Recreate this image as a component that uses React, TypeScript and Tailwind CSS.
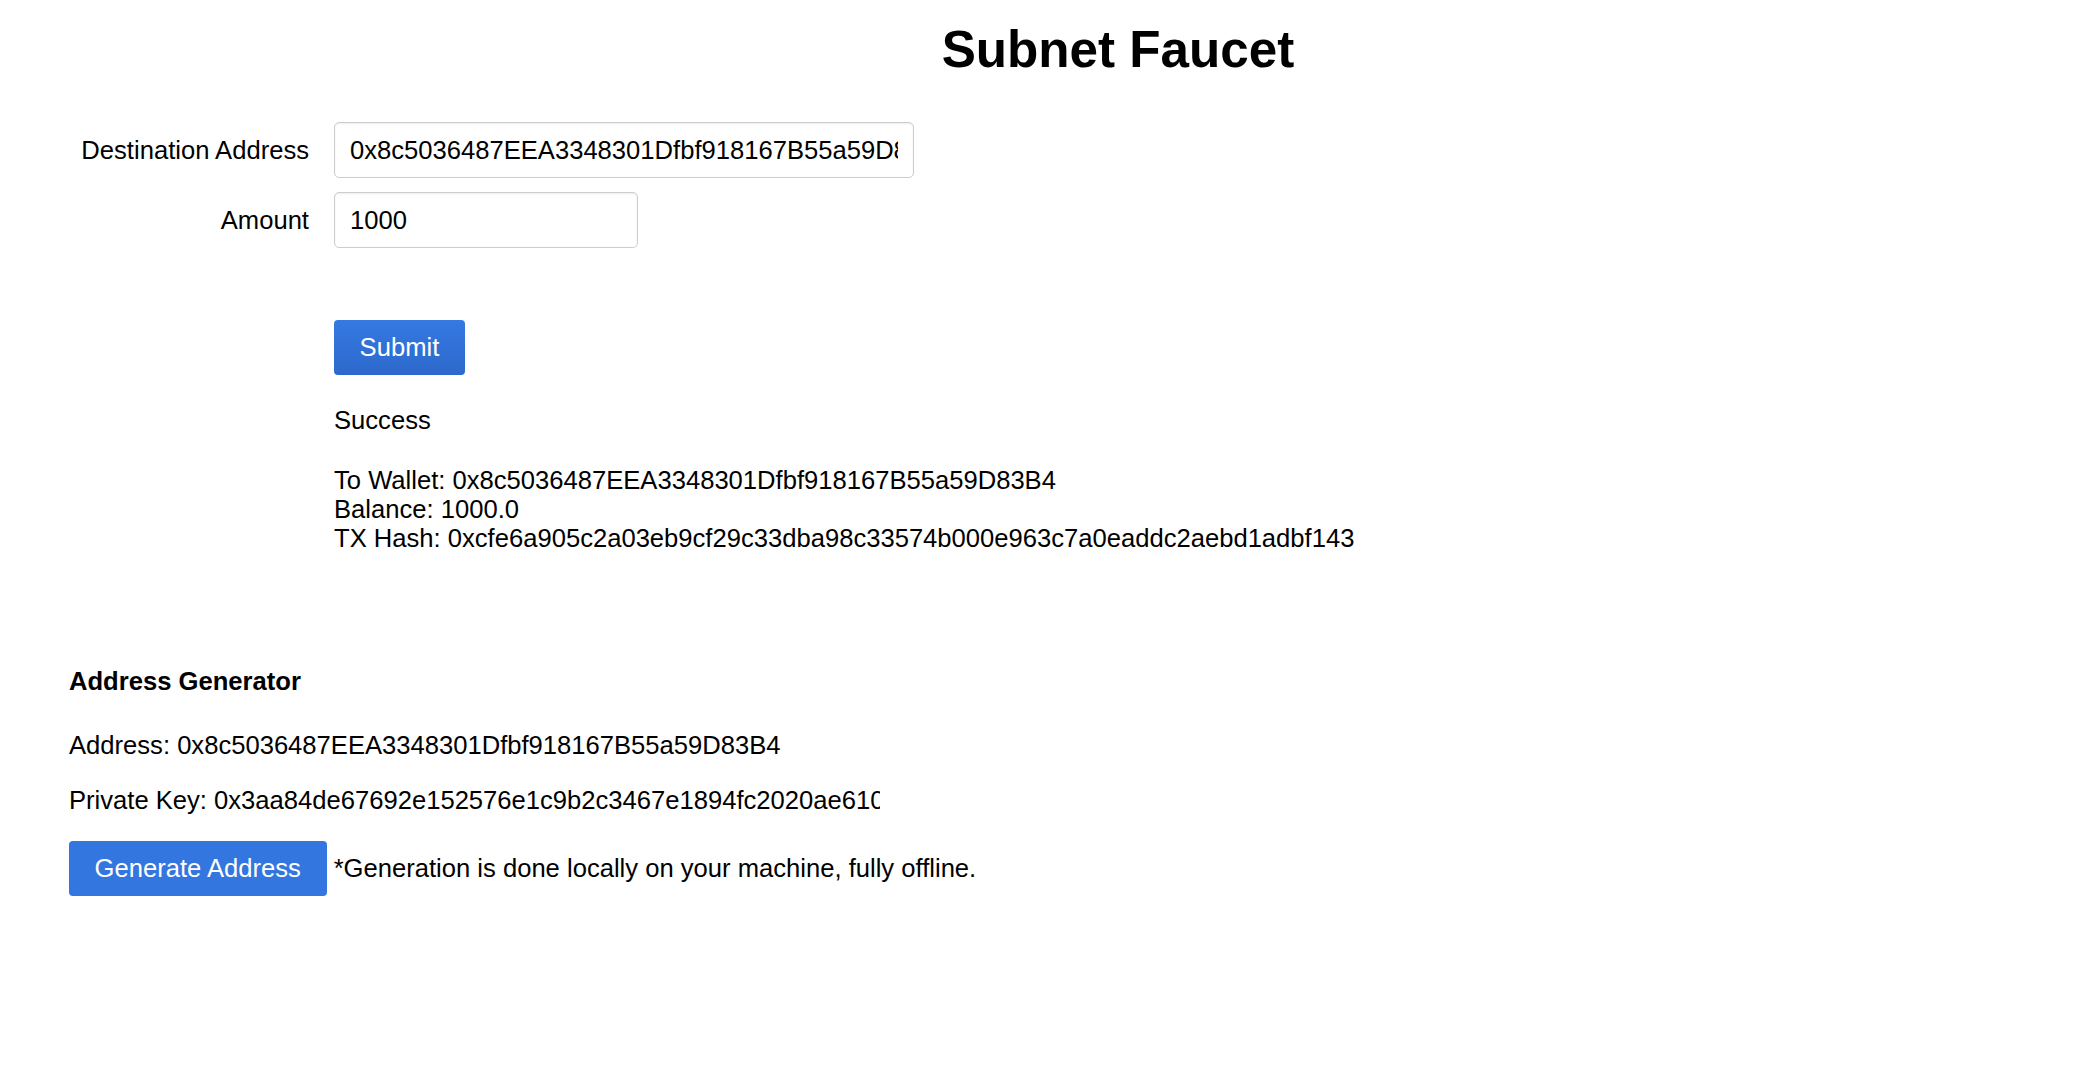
import { useState } from "react";

const WALLET = "0x8c5036487EEA3348301Dfbf918167B55a59D83B4";
const TX_HASH =
  "0xcfe6a905c2a03eb9cf29c33dba98c33574b000e963c7a0eaddc2aebd1adbf143";
const PRIVATE_KEY =
  "0x3aa84de67692e152576e1c9b2c3467e1894fc2020ae610a5c3b9e7d21f40868e";

export default function App() {
  const [address, setAddress] = useState(WALLET);
  const [amount, setAmount] = useState("1000");

  return (
    <div className="min-h-screen bg-white pt-[20px] font-['Liberation_Sans',Arial,sans-serif] text-[25.6px] leading-[29px] text-black">
      <h1 className="pl-[148px] text-center text-[51.2px] font-bold leading-[59px]">
        Subnet Faucet
      </h1>

      {/* faucet form */}
      <div className="mt-[43px] pl-[69px]">
        <div className="flex items-center">
          <label className="w-[240px] text-right">Destination Address</label>
          <input
            className="ml-[25px] h-[56px] w-[580px] rounded-[5px] border border-[#cdcdcd] px-[15px] shadow-[inset_0_1px_2px_rgba(0,0,0,0.08)] outline-none"
            value={address}
            onChange={(e) => setAddress(e.target.value)}
          />
        </div>
        <div className="mt-[14px] flex items-center">
          <label className="w-[240px] text-right">Amount</label>
          <input
            className="ml-[25px] h-[56px] w-[304px] rounded-[5px] border border-[#cdcdcd] px-[15px] shadow-[inset_0_1px_2px_rgba(0,0,0,0.08)] outline-none"
            value={amount}
            onChange={(e) => setAmount(e.target.value)}
          />
        </div>

        <div className="ml-[265px]">
          <button className="mt-[72px] h-[55px] rounded-[4px] bg-linear-to-b from-[#3579e2] to-[#2d69cc] px-[25.6px] text-white">
            Submit
          </button>
          <p className="mt-[31px]">Success</p>
          <p className="mt-[31px]">
            To Wallet: {WALLET}
            <br />
            Balance: 1000.0
            <br />
            TX Hash: {TX_HASH}
          </p>
        </div>
      </div>

      {/* address generator */}
      <div className="mt-[114px] pl-[69px]">
        <h3 className="font-bold">Address Generator</h3>
        <p className="mt-[35px]">Address: {WALLET}</p>
        <p className="mt-[26px] w-[811px] overflow-hidden whitespace-nowrap">
          Private Key: {PRIVATE_KEY}
        </p>
        <div className="mt-[26px]">
          <button className="h-[55px] rounded-[4px] bg-[#3476df] px-[25.6px] align-baseline text-white">
            Generate Address
          </button>{" "}
          *Generation is done locally on your machine, fully offline.
        </div>
      </div>
    </div>
  );
}
